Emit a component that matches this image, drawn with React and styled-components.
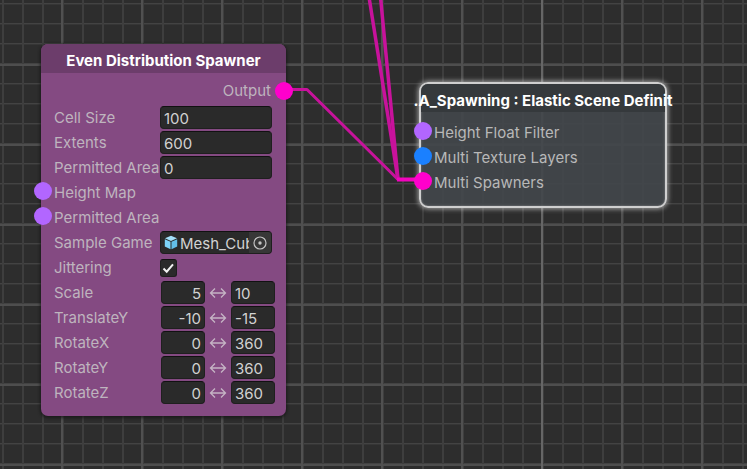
import React, { useState } from "react";
import styled, { createGlobalStyle } from "styled-components";

const GlobalStyle = createGlobalStyle`
  * { box-sizing: border-box; }
  body {
    margin: 0;
    background: #2e2e2e;
    font-family: Inter, "Liberation Sans", sans-serif;
    font-size: 15px;
    line-height: 19px;
  }
`;

const Canvas = styled.main`
  position: relative;
  min-height: 100vh;
  overflow: hidden;
  background-color: #2d2d2d;
  background-image:
    linear-gradient(90deg, #666666 2px, transparent 2px),
    linear-gradient(90deg, #505050 2px, transparent 2px),
    linear-gradient(180deg, #4e4e4e 2px, transparent 2px),
    linear-gradient(90deg, #3e3e3e 2px, transparent 2px),
    linear-gradient(180deg, #434343 1px, #363636 1px, #363636 2px, transparent 2px);
  background-size: 800px 100%, 80px 100%, 100% 80px, 20px 100%, 100% 20px;
  background-position: 541px 0, 61px 0, 0 64px, 2px 0, 0 3px;
`;

const Wires = styled.svg`
  position: absolute;
  inset: 0;
  width: 100%;
  height: 100%;
  fill: none;
  pointer-events: none;
`;

const Node = styled.section`
  position: absolute;
  left: ${(p) => p.$x}px;
  top: ${(p) => p.$y}px;
  width: ${(p) => p.$w}px;
  border-radius: 7px;
  color: #beb4be;
`;

const SpawnerNode = styled(Node)`
  padding-bottom: 11px;
  background: #844a82;
  box-shadow: 0 1px 3px 1px rgba(20, 20, 20, 0.7);
`;

const SceneNode = styled(Node)`
  padding-bottom: 11px;
  border: 2px solid #cfcfcf;
  border-radius: 9px;
  background: rgba(66, 70, 75, 0.92);
  box-shadow: 0 0 5px 1px rgba(225, 225, 225, 0.65), inset 0 0 2px rgba(225, 225, 225, 0.5);
  color: #b8b8b8;
`;

const Title = styled.h2`
  display: flex;
  justify-content: center;
  margin: 0 ${(p) => (p.$wide ? -8 : 0)}px;
  padding: ${(p) => (p.$wide ? "7px 0 2px" : "7px 0 3px")};
  overflow: hidden;
  white-space: nowrap;
  color: #fff;
  font-size: 15px;
  font-weight: 700;
  line-height: 19px;
`;

const Header = styled.header`
  background: ${(p) => p.$fill};
  border-radius: 7px 7px 0 0;
`;

const Ports = styled.div`
  display: grid;
  grid-auto-rows: 25px;
  align-items: center;
  padding-left: 13px;
  margin-top: 8px;
`;

const PortRow = styled.div`
  position: relative;
  display: flex;
  align-items: center;
  height: 25px;
  justify-content: ${(p) => (p.$out ? "flex-end" : "flex-start")};
  padding-right: ${(p) => (p.$out ? "15px" : "0")};
`;

const Port = styled.button`
  position: absolute;
  top: ${(p) => (p.$out ? 4 : 2)}px;
  ${(p) => (p.$out ? "right: -7px;" : "left: -20px;")}
  width: 18px;
  height: 18px;
  padding: 0;
  border: 0;
  border-radius: 50%;
  background: ${(p) => p.$color};
`;

const Body = styled.div`
  padding: 5px 0 0;
`;

const Fields = styled.div`
  padding: 2px 11px 0 13px;
`;

const Row = styled.div`
  position: relative;
  display: grid;
  grid-template-columns: 106px 1fr;
  align-items: center;
  height: 25px;
  white-space: nowrap;
`;

const Label = styled.label`
  overflow: hidden;
`;

const Field = styled.input`
  width: ${(p) => (p.$pair ? "44px" : "112px")};
  height: 23px;
  padding: 2px 3px 0;
  border: 1px solid #1f1f1f;
  border-top-color: #111;
  border-radius: 4px;
  background: #2a2a2a;
  color: #d2d2d2;
  font: inherit;
  text-align: ${(p) => (p.$right ? "right" : "left")};
`;

const Pair = styled.div`
  display: flex;
  align-items: center;
  justify-content: space-between;
  width: 114px;
  margin-left: 1px;
`;

const ObjectField = styled.div`
  display: flex;
  align-items: center;
  width: 112px;
  height: 23px;
  padding-left: 3px;
  overflow: hidden;
  border: 1px solid #1f1f1f;
  border-top-color: #111;
  border-radius: 4px;
  background: #2a2a2a;
`;

const ObjectName = styled.input`
  flex: 1;
  min-width: 0;
  height: 21px;
  margin-left: 2px;
  padding: 2px 0 0;
  border: 0;
  background: none;
  color: #d2d2d2;
  font: inherit;
`;

const Picker = styled.button`
  display: grid;
  place-items: center;
  width: 22px;
  height: 21px;
  padding: 0;
  border: 0;
  background: #373737;
`;

const Check = styled.input`
  appearance: none;
  width: 17px;
  height: 18px;
  margin: 0;
  border: 1px solid #1f1f1f;
  border-top-color: #111;
  border-radius: 3px;
  background: #2a2a2a;
`;

const CheckCell = styled.span`
  display: grid;
  justify-content: start;
  align-items: center;

  & > * { grid-area: 1 / 1; }
  & > svg { pointer-events: none; visibility: hidden; }
  & > input:checked + svg { visibility: visible; }
`;

const Arrow = () => (
  <svg width="18" height="12" viewBox="0 0 18 12" fill="none" stroke="#c5b4c5" strokeWidth="1.3" aria-hidden="true">
    <path d="M1.5 6H16.5M6 1.5L1.5 6L6 10.5M12 1.5L16.5 6L12 10.5" />
  </svg>
);

const Cube = () => (
  <svg width="14" height="15" viewBox="0 0 14 15" aria-hidden="true">
    <path d="M7 .8L13 3.3L7 6L1 3.3Z" fill="#a3e0fa" />
    <path d="M.8 4.2L6.5 6.8V14.2L.8 11.4Z" fill="#7dd3f8" />
    <path d="M13.2 4.2L7.5 6.8V14.2L13.2 11.4Z" fill="#63bfe9" />
  </svg>
);

const Target = () => (
  <svg width="14" height="14" viewBox="0 0 14 14" aria-hidden="true">
    <circle cx="7" cy="7" r="6" fill="none" stroke="#c4c4c4" strokeWidth="1.2" />
    <circle cx="7" cy="7" r="1.7" fill="#c4c4c4" />
  </svg>
);

const Tick = () => (
  <svg width="17" height="18" viewBox="0 0 17 18" fill="none" stroke="#f2f2f2" strokeWidth="2" aria-hidden="true">
    <path d="M3.5 9.5L6.7 12.7L13 5.3" />
  </svg>
);

function NumberRow({ id, label, value }) {
  return (
    <Row>
      <Label htmlFor={id}>{label}</Label>
      <Field id={id} defaultValue={value} />
    </Row>
  );
}

function RangeRow({ id, label, min, max }) {
  return (
    <Row>
      <Label htmlFor={id}>{label}</Label>
      <Pair>
        <Field id={id} $pair $right defaultValue={min} />
        <Arrow />
        <Field $pair aria-label={`${label} maximum`} defaultValue={max} />
      </Pair>
    </Row>
  );
}

const ranges = [
  ["Scale", "5", "10"],
  ["TranslateY", "-10", "-15"],
  ["RotateX", "0", "360"],
  ["RotateY", "0", "360"],
  ["RotateZ", "0", "360"],
];

const inputs = [
  ["Height Float Filter", "#b266ff"],
  ["Multi Texture Layers", "#1a80ff"],
  ["Multi Spawners", "#ff00cc"],
];

export default function App() {
  const [jitter, setJitter] = useState(true);
  return (
    <Canvas>
      <GlobalStyle />
      <Wires aria-hidden="true" stroke="#c8129c" strokeWidth="3" strokeLinejoin="round">
        <path d="M283 89.5H307L398 179.5" />
        <path d="M369 -3L398 179.5" strokeWidth="3.5" />
        <path d="M380.5 -3L398 179.5" strokeWidth="3.5" />
        <path d="M397 179.5H423" stroke="#f204bd" strokeWidth="4" />
      </Wires>

      <SpawnerNode $x={41} $y={44} $w={245}>
        <Header $fill="#6c3d6b">
          <Title>Even Distribution Spawner</Title>
        </Header>
        <Body>
          <PortRow $out>
            Output
            <Port $out $color="#ff00cc" aria-label="Output port" />
          </PortRow>
          <Fields>
            <NumberRow id="cell" label="Cell Size" value="100" />
            <NumberRow id="extents" label="Extents" value="600" />
            <NumberRow id="area" label="Permitted Area" value="0" />
            <Row>
              Height Map
              <Port $color="#b266ff" aria-label="Height Map port" />
            </Row>
            <Row>
              Permitted Area
              <Port $color="#b266ff" aria-label="Permitted Area port" />
            </Row>
            <Row>
              <Label htmlFor="sample">Sample Game</Label>
              <ObjectField>
                <Cube />
                <ObjectName id="sample" defaultValue="Mesh_Cube" />
                <Picker aria-label="Pick object"><Target /></Picker>
              </ObjectField>
            </Row>
            <Row>
              <Label htmlFor="jitter">Jittering</Label>
              <CheckCell>
                <Check id="jitter" type="checkbox" checked={jitter} onChange={(e) => setJitter(e.target.checked)} />
                <Tick />
              </CheckCell>
            </Row>
            {ranges.map(([label, min, max]) => (
              <RangeRow key={label} id={label} label={label} min={min} max={max} />
            ))}
          </Fields>
        </Body>
      </SpawnerNode>

      <SceneNode $x={419} $y={82} $w={248}>
        <Header $fill="#35393c">
          <Title $wide>.A_Spawning : Elastic Scene Definit</Title>
        </Header>
        <Ports>
          {inputs.map(([label, color]) => (
            <PortRow key={label}>
              {label}
              <Port $color={color} aria-label={`${label} port`} />
            </PortRow>
          ))}
        </Ports>
      </SceneNode>
    </Canvas>
  );
}
